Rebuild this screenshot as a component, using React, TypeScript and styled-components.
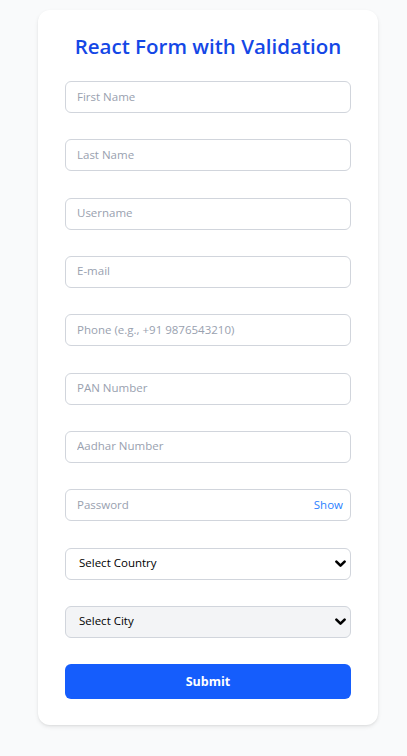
import React, { useState } from "react";
import styled, { createGlobalStyle } from "styled-components";

const Global = createGlobalStyle`
  html, body { margin: 0; padding: 0; background: #f9fafb; }
  body { font-family: "Open Sans", "Noto Sans", sans-serif; }
  * { box-sizing: border-box; }
`;

const Page = styled.div`
  min-height: 756px;
  padding: 10px 29px 0 38px;
  background: #f9fafb;
`;

const Card = styled.form`
  width: 340px;
  background: #ffffff;
  border-radius: 12px;
  box-shadow: 0 2px 4px rgba(0, 0, 0, 0.08), 0 1px 2px rgba(0, 0, 0, 0.05);
  padding: 22px 27px 26px 27px;
  display: flex;
  flex-direction: column;
`;

const Title = styled.h1`
  margin: 0 0 21px 0;
  font-size: 20.5px;
  line-height: 28px;
  font-weight: 600;
  color: #1447e6;
  text-align: center;
`;

const Fields = styled.div`
  display: flex;
  flex-direction: column;
  gap: 26.33px;
`;

const Field = styled.div`
  position: relative;
  height: 32px;
`;

const Input = styled.input`
  width: 100%;
  height: 32px;
  border: 1px solid #d1d5dc;
  border-radius: 6px;
  padding: 0 11px 2px 11px;
  font-family: inherit;
  font-size: 11.5px;
  color: #111827;
  background: #ffffff;
  outline: none;
  &::placeholder { color: #99a1af; }
`;

const Toggle = styled.button`
  position: absolute;
  right: 8px;
  top: 50%;
  transform: translateY(-55%);
  border: 0;
  background: none;
  padding: 0;
  font-family: inherit;
  font-size: 11.5px;
  color: #2b7fff;
  cursor: pointer;
`;

const Select = styled.select<{ $disabledLook?: boolean }>`
  appearance: none;
  -webkit-appearance: none;
  width: 100%;
  height: 32px;
  border: 1px solid #d1d5dc;
  border-radius: 6px;
  padding: 0 28px 2px 13px;
  font-family: inherit;
  font-size: 11.5px;
  color: #000000;
  background: ${(p) => (p.$disabledLook ? "#f3f4f6" : "#ffffff")};
  outline: none;
`;

const Chevron = styled.svg`
  position: absolute;
  right: 5px;
  top: 12px;
  width: 11px;
  height: 8px;
  pointer-events: none;
`;

const Submit = styled.button`
  margin-top: 26px;
  height: 35px;
  width: 100%;
  border: 0;
  border-radius: 6px;
  background: #155dfc;
  color: #ffffff;
  font-family: inherit;
  font-size: 12.5px;
  font-weight: 700;
  cursor: pointer;
`;

const textFields = [
  "First Name",
  "Last Name",
  "Username",
  "E-mail",
  "Phone (e.g., +91 9876543210)",
  "PAN Number",
  "Aadhar Number",
];

const Arrow = () => (
  <Chevron viewBox="0 0 11 8">
    <path
      d="M1.4 1.6 L5.5 5.7 L9.6 1.6"
      fill="none"
      stroke="#000"
      strokeWidth="2.6"
      strokeLinecap="round"
      strokeLinejoin="round"
    />
  </Chevron>
);

export default function App() {
  const [show, setShow] = useState(false);
  return (
    <>
      <Global />
      <Page>
        <Card onSubmit={(e) => e.preventDefault()}>
          <Title>React Form with Validation</Title>
          <Fields>
            {textFields.map((p) => (
              <Field key={p}>
                <Input placeholder={p} />
              </Field>
            ))}
            <Field>
              <Input placeholder="Password" type={show ? "text" : "password"} />
              <Toggle type="button" onClick={() => setShow(!show)}>
                {show ? "Hide" : "Show"}
              </Toggle>
            </Field>
            <Field>
              <Select defaultValue="">
                <option value="">Select Country</option>
                <option value="in">India</option>
                <option value="us">USA</option>
              </Select>
              <Arrow />
            </Field>
            <Field>
              <Select $disabledLook defaultValue="">
                <option value="">Select City</option>
              </Select>
              <Arrow />
            </Field>
          </Fields>
          <Submit type="submit">Submit</Submit>
        </Card>
      </Page>
    </>
  );
}
